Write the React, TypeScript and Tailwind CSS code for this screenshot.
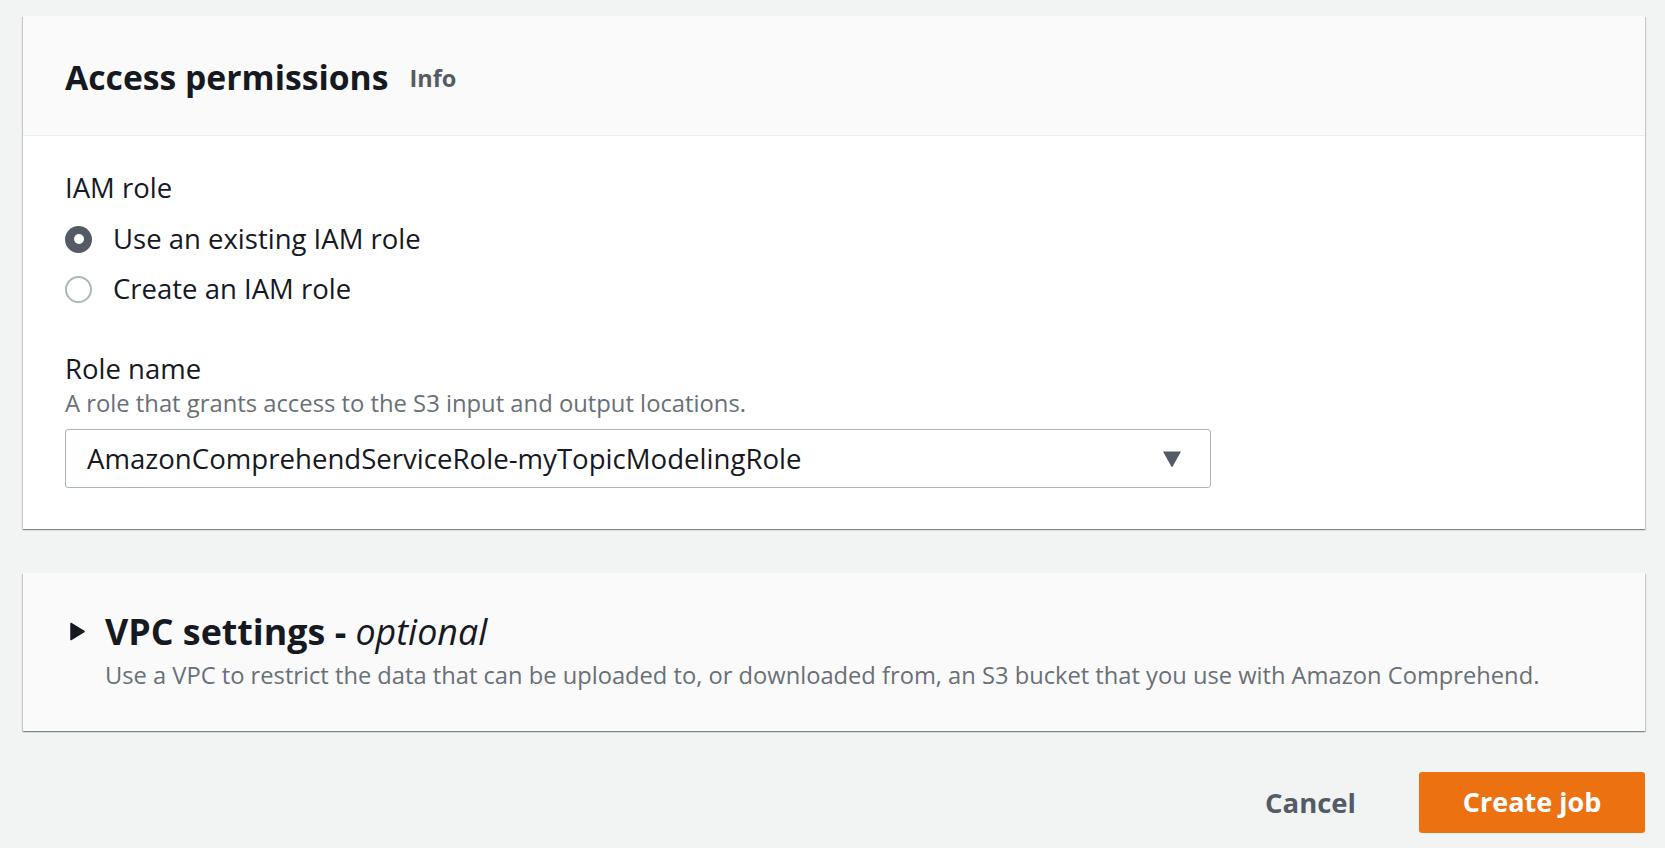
import React from 'react'

const font = { fontFamily: '"Open Sans", "Noto Sans", Arial, sans-serif' }

const cardShadow =
  'shadow-[0_1px_1px_0_rgba(0,28,36,0.3),1px_1px_1px_0_rgba(0,28,36,0.15),-1px_1px_1px_0_rgba(0,28,36,0.15)]'

function Radio({ checked, label }: { checked: boolean; label: string }) {
  return (
    <label className="flex h-[36px] items-center gap-[21px]">
      {checked ? (
        <span className="flex h-[27px] w-[27px] items-center justify-center rounded-full bg-[#545b64]">
          <span className="h-[10px] w-[10px] rounded-full bg-white" />
        </span>
      ) : (
        <span className="h-[27px] w-[27px] rounded-full border-2 border-[#aab7b8] bg-white" />
      )}
      <span className="text-[27.5px] leading-[36px] text-[#16191f]">{label}</span>
    </label>
  )
}

export default function App() {
  return (
    <div className="min-h-screen bg-[#f2f3f3] pt-[16px] pl-[23px] pr-[20px]" style={font}>
      {/* Access permissions */}
      <div className={`bg-white ${cardShadow}`}>
        <div className="flex h-[120px] items-center gap-[21px] border-b border-[#eaeded] bg-[#fafafa] px-[42px] pt-[3px]">
          <h2 className="text-[33.7px] font-bold leading-[40px] text-[#16191f]">Access permissions</h2>
          <span className="mt-[4px] text-[23.5px] font-bold text-[#545b64]">Info</span>
        </div>
        <div className="px-[42px] pt-[34px] pb-[41px]">
          <div className="text-[27.5px] leading-[36px] text-[#16191f]">IAM role</div>
          <div className="mt-[15px] flex flex-col gap-[14px]">
            <Radio checked label="Use an existing IAM role" />
            <Radio checked={false} label="Create an IAM role" />
          </div>
          <div className="mt-[44px] text-[27.5px] leading-[36px] text-[#16191f]">Role name</div>
          <div className="mt-[1px] text-[23.8px] leading-[30px] text-[#687078]">
            A role that grants access to the S3 input and output locations.
          </div>
          <div className="mt-[11px] flex h-[59px] w-[1146px] items-center justify-between rounded-[3px] border border-[#aab7b8] bg-white pl-[21px] pr-[28px]">
            <span className="text-[27.6px] text-[#16191f]">AmazonComprehendServiceRole-myTopicModelingRole</span>
            <svg width="20" height="18" viewBox="0 0 20 18">
              <path d="M1 1.5 H19 L10.7 16.5 Q10 17.5 9.3 16.5 Z" fill="#545b64" />
            </svg>
          </div>
        </div>
      </div>

      {/* VPC settings */}
      <div className={`mt-[44px] bg-[#fafafa] px-[47px] pt-[38px] pb-[41px] ${cardShadow}`}>
        <div className="flex items-center gap-[20px]">
          <svg width="15" height="19" viewBox="0 0 15 19">
            <path d="M1 1.5 L14 9.5 L1 17.5 Z" fill="#16191f" stroke="#16191f" strokeLinejoin="round" strokeWidth="1.5" />
          </svg>
          <h2 className="text-[35.8px] leading-[40px] text-[#16191f]">
            <span className="font-bold">VPC settings - </span>
            <span className="italic">optional</span>
          </h2>
        </div>
        <p className="mt-[9px] pl-[35px] text-[23.7px] leading-[30px] text-[#687078]">
          Use a VPC to restrict the data that can be uploaded to, or downloaded from, an S3 bucket that you use with Amazon Comprehend.
        </p>
      </div>

      {/* Actions */}
      <div className="mt-[41px] flex items-center justify-end gap-[63px]">
        <button className="text-[27.5px] font-bold text-[#545b64]">Cancel</button>
        <button className="h-[61px] w-[226px] rounded-[3px] bg-[#ec7211] text-[27px] font-bold text-white">
          Create job
        </button>
      </div>
    </div>
  )
}
